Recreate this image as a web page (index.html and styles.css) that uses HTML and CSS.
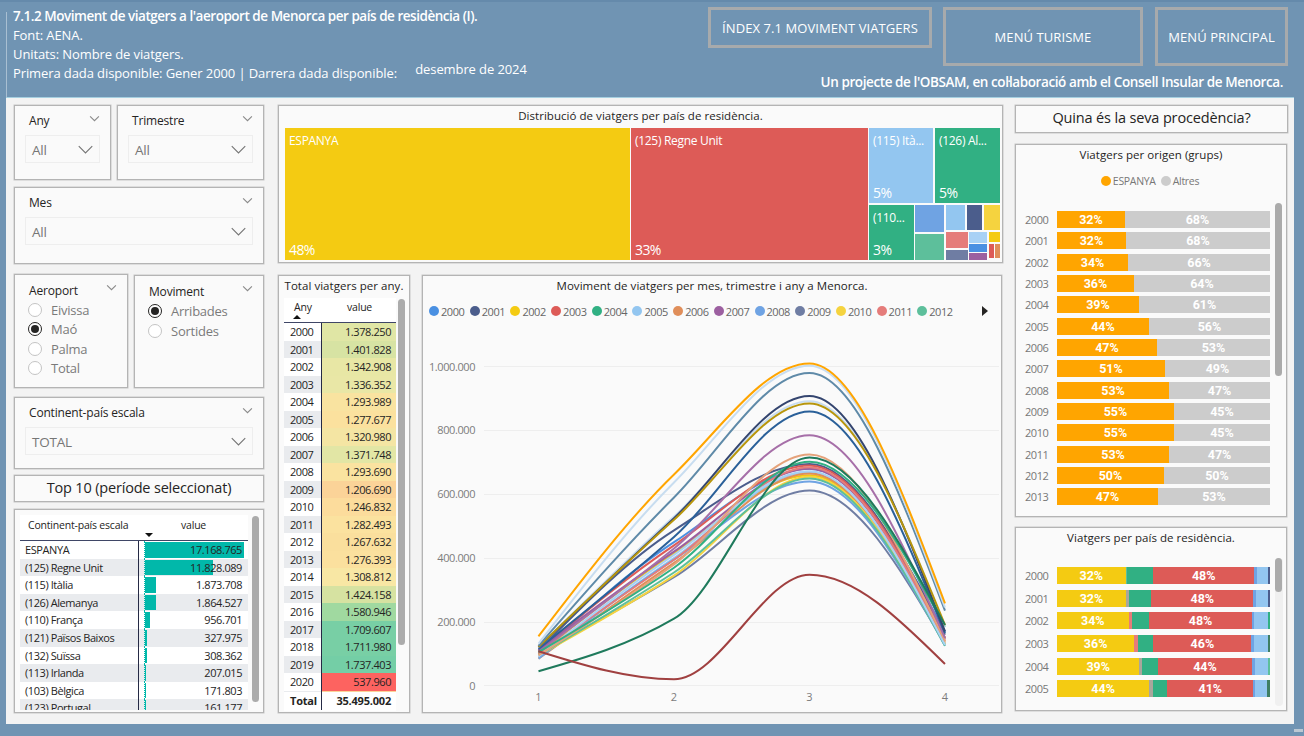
FILE: index.html
```html
<!DOCTYPE html>
<html lang="ca">
<head>
<meta charset="utf-8">
<title>Moviment de viatgers</title>
<link rel="stylesheet" href="styles.css">
</head>
<body>
<header class="header">
  <div class="intro">
    <div class="line title">7.1.2 Moviment de viatgers a l'aeroport de Menorca per país de residència (I).</div>
    <div class="line">Font: AENA.</div>
    <div class="line">Unitats: Nombre de viatgers.</div>
    <div class="line">Primera dada disponible: Gener 2000 | Darrera dada disponible: <span class="date">desembre de 2024</span></div>
  </div>
  <div class="nav">
    <div class="buttons">
      <div class="btn btn-index">ÍNDEX 7.1 MOVIMENT VIATGERS</div>
      <div class="btn btn-tur">MENÚ TURISME</div>
      <div class="btn btn-pri">MENÚ PRINCIPAL</div>
    </div>
    <div class="credit">Un projecte de l'OBSAM, en col·laboració amb el Consell Insular de Menorca.</div>
  </div>
</header>

<main class="main">
  <section class="col-left">
    <div class="row slicers-top">
      <div class="panel slicer s-any">
        <div class="sl-head"><span>Any</span><svg class="chev-s" viewBox="0 0 10 6"><path d="M1 1l4 4 4-4"/></svg></div>
        <div class="drop"><span>All</span><svg class="chev-l" viewBox="0 0 14 8"><path d="M1 1l6 6 6-6"/></svg></div>
      </div>
      <div class="panel slicer s-tri">
        <div class="sl-head"><span>Trimestre</span><svg class="chev-s" viewBox="0 0 10 6"><path d="M1 1l4 4 4-4"/></svg></div>
        <div class="drop"><span>All</span><svg class="chev-l" viewBox="0 0 14 8"><path d="M1 1l6 6 6-6"/></svg></div>
      </div>
    </div>
    <div class="panel slicer s-mes">
      <div class="sl-head"><span>Mes</span><svg class="chev-s" viewBox="0 0 10 6"><path d="M1 1l4 4 4-4"/></svg></div>
      <div class="drop"><span>All</span><svg class="chev-l" viewBox="0 0 14 8"><path d="M1 1l6 6 6-6"/></svg></div>
    </div>
    <div class="row radios-row">
      <div class="panel radio-panel s-aero">
        <div class="sl-head"><span>Aeroport</span><svg class="chev-s" viewBox="0 0 10 6"><path d="M1 1l4 4 4-4"/></svg></div>
        <div class="radio"><i></i>Eivissa</div>
        <div class="radio on"><i></i>Maó</div>
        <div class="radio"><i></i>Palma</div>
        <div class="radio"><i></i>Total</div>
      </div>
      <div class="panel radio-panel s-mov">
        <div class="sl-head"><span>Moviment</span><svg class="chev-s" viewBox="0 0 10 6"><path d="M1 1l4 4 4-4"/></svg></div>
        <div class="radio wide on"><i></i>Arribades</div>
        <div class="radio wide"><i></i>Sortides</div>
      </div>
    </div>
    <div class="panel slicer s-cont">
      <div class="sl-head"><span>Continent-país escala</span><svg class="chev-s" viewBox="0 0 10 6"><path d="M1 1l4 4 4-4"/></svg></div>
      <div class="drop"><span>TOTAL</span><svg class="chev-l" viewBox="0 0 14 8"><path d="M1 1l6 6 6-6"/></svg></div>
    </div>
    <div class="panel heading s-top">Top 10 (període seleccionat)</div>
    <div class="panel top-table">
      <div class="tt-body">
        <div class="tt-head"><span class="tt-h1">Continent-país escala</span><span class="tt-h2">value</span><i class="sort-down"></i></div>
        <div class="tt-row"><span class="tt-name">ESPANYA</span><span class="tt-val"><b style="width:99px"></b><em>17.168.765</em></span></div>
        <div class="tt-row alt"><span class="tt-name">(125) Regne Unit</span><span class="tt-val"><b style="width:68px"></b><em>11.828.089</em></span></div>
        <div class="tt-row"><span class="tt-name">(115) Itàlia</span><span class="tt-val"><b style="width:11px"></b><em>1.873.708</em></span></div>
        <div class="tt-row alt"><span class="tt-name">(126) Alemanya</span><span class="tt-val"><b style="width:11px"></b><em>1.864.527</em></span></div>
        <div class="tt-row"><span class="tt-name">(110) França</span><span class="tt-val"><b style="width:5px"></b><em>956.701</em></span></div>
        <div class="tt-row alt"><span class="tt-name">(121) Països Baixos</span><span class="tt-val"><b style="width:2px"></b><em>327.975</em></span></div>
        <div class="tt-row"><span class="tt-name">(132) Suïssa</span><span class="tt-val"><b style="width:2px"></b><em>308.362</em></span></div>
        <div class="tt-row alt"><span class="tt-name">(113) Irlanda</span><span class="tt-val"><b style="width:1px"></b><em>207.015</em></span></div>
        <div class="tt-row"><span class="tt-name">(103) Bèlgica</span><span class="tt-val"><b style="width:1px"></b><em>171.803</em></span></div>
        <div class="tt-row alt"><span class="tt-name">(123) Portugal</span><span class="tt-val"><b style="width:1px"></b><em>161.177</em></span></div>
      </div>
      <div class="thumb tt-thumb"></div>
    </div>
  </section>

  <section class="col-mid">
    <div class="panel tree-panel">
      <div class="p-title">Distribució de viatgers per país de residència.</div>
      <div class="tree">
        <div class="tile t-es c-yellow"><span>ESPANYA</span><strong>48%</strong></div>
        <div class="tile t-uk c-red"><span>(125) Regne Unit</span><strong>33%</strong></div>
        <div class="tree-rest">
          <div class="tr-top">
            <div class="tile t-it c-lblue"><span>(115) Ità...</span><strong>5%</strong></div>
            <div class="tile t-de c-green"><span>(126) Al...</span><strong>5%</strong></div>
          </div>
          <div class="tr-bot">
            <div class="tile t-fr c-green"><span>(110...</span><strong>3%</strong></div>
            <div class="tc tc-a"><div class="c-blue2 g27"></div><div class="c-green2 g26"></div></div>
            <div class="tc tc-b">
              <div class="tr tr-25"><div class="c-lblue w19"></div><div class="c-navy w15"></div><div class="c-yellow2 w16"></div></div>
              <div class="tr tr-28">
                <div class="tc tc-c"><div class="c-salmon g16"></div><div class="c-slate g10"></div></div>
                <div class="tc tc-d"><div class="c-lblue2 g11"></div><div class="c-blue g8"></div><div class="c-purple g7"></div></div>
                <div class="tc tc-e"><div class="c-yellow g10"></div><div class="tr tr-14"><div class="c-red w5"></div><div class="c-orange w5"></div></div></div>
              </div>
            </div>
          </div>
        </div>
      </div>
    </div>
    <div class="row mid-bottom">
      <div class="panel year-panel">
        <div class="p-title yt">Total viatgers per any.</div>
        <div class="yt-table">
          <div class="yt-head"><span class="yh1">Any<i class="sort-up"></i></span><span class="yh2">value</span></div>
          <div class="yt-rows">
            <div class="yr"><span>2000</span><em style="background:#e0e6a5">1.378.250</em></div>
            <div class="yr alt"><span>2001</span><em style="background:#d7e3a3">1.401.828</em></div>
            <div class="yr"><span>2002</span><em style="background:#e8e7a5">1.342.908</em></div>
            <div class="yr alt"><span>2003</span><em style="background:#e9e7a6">1.336.352</em></div>
            <div class="yr"><span>2004</span><em style="background:#f9e3a0">1.293.989</em></div>
            <div class="yr alt"><span>2005</span><em style="background:#fbe19e">1.277.677</em></div>
            <div class="yr"><span>2006</span><em style="background:#f4e5a3">1.320.980</em></div>
            <div class="yr alt"><span>2007</span><em style="background:#e2e6a5">1.371.748</em></div>
            <div class="yr"><span>2008</span><em style="background:#fae3a0">1.293.690</em></div>
            <div class="yr alt"><span>2009</span><em style="background:#fbd398">1.206.690</em></div>
            <div class="yr"><span>2010</span><em style="background:#fcdc9c">1.246.832</em></div>
            <div class="yr alt"><span>2011</span><em style="background:#fbe29f">1.282.493</em></div>
            <div class="yr"><span>2012</span><em style="background:#fadf9d">1.267.632</em></div>
            <div class="yr alt"><span>2013</span><em style="background:#fbe09e">1.276.393</em></div>
            <div class="yr"><span>2014</span><em style="background:#f8e7a4">1.308.812</em></div>
            <div class="yr alt"><span>2015</span><em style="background:#d6e2a1">1.424.158</em></div>
            <div class="yr"><span>2016</span><em style="background:#a0d9a0">1.580.946</em></div>
            <div class="yr alt"><span>2017</span><em style="background:#78cfa5">1.709.607</em></div>
            <div class="yr"><span>2018</span><em style="background:#78cfa5">1.711.980</em></div>
            <div class="yr alt"><span>2019</span><em style="background:#74cea6">1.737.403</em></div>
            <div class="yr"><span>2020</span><em style="background:#fd6360">537.960</em></div>
            <div class="yr alt sliver"><span></span><em style="background:#fbd49a"></em></div>
          </div>
          <div class="yr total"><span>Total</span><em>35.495.002</em></div>
        </div>
        <div class="thumb yt-thumb"></div>
      </div>
      <div class="panel line-panel">
        <div class="p-title lt">Moviment de viatgers per mes, trimestre i any a Menorca.</div>
        <div class="legend">
          <span><i class="c-blue"></i>2000</span><span><i class="c-navy"></i>2001</span><span><i class="c-yellow"></i>2002</span><span><i class="c-red"></i>2003</span><span><i class="c-green"></i>2004</span><span><i class="c-lblue"></i>2005</span><span><i class="c-orange"></i>2006</span><span><i class="c-purple"></i>2007</span><span><i class="c-blue2"></i>2008</span><span><i class="c-slate"></i>2009</span><span><i class="c-yellow2"></i>2010</span><span><i class="c-salmon"></i>2011</span><span><i class="c-green2"></i>2012</span>
          <b class="next"></b>
        </div>
        <svg class="chart" id="chart" viewBox="424 330 577 378">
          <g class="grid">
            <line x1="484" x2="999" y1="366.5" y2="366.5"/>
            <line x1="484" x2="999" y1="430.5" y2="430.5"/>
            <line x1="484" x2="999" y1="494.5" y2="494.5"/>
            <line x1="484" x2="999" y1="558.5" y2="558.5"/>
            <line x1="484" x2="999" y1="622.5" y2="622.5"/>
            <line x1="484" x2="999" y1="685.5" y2="685.5"/>
          </g>
          <g class="ylab">
            <text x="475" y="371">1.000.000</text>
            <text x="475" y="434">800.000</text>
            <text x="475" y="498">600.000</text>
            <text x="475" y="562">400.000</text>
            <text x="475" y="626">200.000</text>
            <text x="475" y="690">0</text>
          </g>
          <g class="xlab">
            <text x="538.5" y="701">1</text>
            <text x="674" y="701">2</text>
            <text x="809.5" y="701">3</text>
            <text x="945" y="701">4</text>
          </g>
          <g id="lines" class="lines"></g>
        </svg>
      </div>
    </div>
  </section>

  <section class="col-right">
    <div class="panel heading s-qui">Quina és la seva procedència?</div>
    <div class="panel stack-panel sp-1">
      <div class="p-title st">Viatgers per origen (grups)</div>
      <div class="st-legend"><span><i class="c-amber"></i>ESPANYA</span><span><i class="c-grey"></i>Altres</span></div>
      <div class="bars bars-1">
        <div class="bar-row"><label>2000</label><div class="bar"><div class="c-amber" style="width:31.9%">32%</div><div class="c-grey fill">68%</div></div></div>
        <div class="bar-row"><label>2001</label><div class="bar"><div class="c-amber" style="width:32.4%">32%</div><div class="c-grey fill">68%</div></div></div>
        <div class="bar-row"><label>2002</label><div class="bar"><div class="c-amber" style="width:33.4%">34%</div><div class="c-grey fill">66%</div></div></div>
        <div class="bar-row"><label>2003</label><div class="bar"><div class="c-amber" style="width:36.1%">36%</div><div class="c-grey fill">64%</div></div></div>
        <div class="bar-row"><label>2004</label><div class="bar"><div class="c-amber" style="width:38.5%">39%</div><div class="c-grey fill">61%</div></div></div>
        <div class="bar-row"><label>2005</label><div class="bar"><div class="c-amber" style="width:43.2%">44%</div><div class="c-grey fill">56%</div></div></div>
        <div class="bar-row"><label>2006</label><div class="bar"><div class="c-amber" style="width:46.9%">47%</div><div class="c-grey fill">53%</div></div></div>
        <div class="bar-row"><label>2007</label><div class="bar"><div class="c-amber" style="width:50.7%">51%</div><div class="c-grey fill">49%</div></div></div>
        <div class="bar-row"><label>2008</label><div class="bar"><div class="c-amber" style="width:52.6%">53%</div><div class="c-grey fill">47%</div></div></div>
        <div class="bar-row"><label>2009</label><div class="bar"><div class="c-amber" style="width:54.9%">55%</div><div class="c-grey fill">45%</div></div></div>
        <div class="bar-row"><label>2010</label><div class="bar"><div class="c-amber" style="width:54.9%">55%</div><div class="c-grey fill">45%</div></div></div>
        <div class="bar-row"><label>2011</label><div class="bar"><div class="c-amber" style="width:52.6%">53%</div><div class="c-grey fill">47%</div></div></div>
        <div class="bar-row"><label>2012</label><div class="bar"><div class="c-amber" style="width:50.2%">50%</div><div class="c-grey fill">50%</div></div></div>
        <div class="bar-row"><label>2013</label><div class="bar"><div class="c-amber" style="width:47.4%">47%</div><div class="c-grey fill">53%</div></div></div>
      </div>
      <div class="thumb sp1-thumb"></div>
    </div>
    <div class="panel stack-panel sp-2">
      <div class="p-title st">Viatgers per país de residència.</div>
      <div class="bars bars-2">
        <div class="bar-row"><label>2000</label><div class="bar"><div class="c-yellow" style="width:32.2%">32%</div><div class="c-green2" style="width:.9%"></div><div class="c-green" style="width:12.1%"></div><div class="c-red" style="width:47.4%">48%</div><div class="c-blue2" style="width:1.3%"></div><div class="c-lblue" style="width:5%"></div><div class="c-navy fill"></div></div></div>
        <div class="bar-row"><label>2001</label><div class="bar"><div class="c-yellow" style="width:32.4%">32%</div><div class="c-ash" style="width:1.4%"></div><div class="c-green" style="width:10.5%"></div><div class="c-red" style="width:47.9%">48%</div><div class="c-blue2" style="width:1.4%"></div><div class="c-lblue" style="width:5.5%"></div><div class="c-navy fill"></div></div></div>
        <div class="bar-row"><label>2002</label><div class="bar"><div class="c-yellow" style="width:33.6%">34%</div><div class="c-salmon" style="width:1.4%"></div><div class="c-green" style="width:8.3%"></div><div class="c-red" style="width:48.2%">48%</div><div class="c-blue2" style="width:1.1%"></div><div class="c-lblue" style="width:6.3%"></div><div class="c-green fill"></div></div></div>
        <div class="bar-row"><label>2003</label><div class="bar"><div class="c-yellow" style="width:36.3%">36%</div><div class="c-salmon" style="width:1.6%"></div><div class="c-green" style="width:7.4%"></div><div class="c-red" style="width:45.9%">46%</div><div class="c-blue2" style="width:1.4%"></div><div class="c-lblue" style="width:6.3%"></div><div class="c-dgreen fill"></div></div></div>
        <div class="bar-row"><label>2004</label><div class="bar"><div class="c-yellow" style="width:38.7%">39%</div><div class="c-ash" style="width:1.4%"></div><div class="c-green" style="width:7.5%"></div><div class="c-red" style="width:43.8%">44%</div><div class="c-blue2" style="width:1.4%"></div><div class="c-lblue" style="width:6.3%"></div><div class="c-green2 fill"></div></div></div>
        <div class="bar-row"><label>2005</label><div class="bar"><div class="c-yellow" style="width:43.3%">44%</div><div class="c-ash" style="width:1.6%"></div><div class="c-green" style="width:6.9%"></div><div class="c-red" style="width:40.4%">41%</div><div class="c-blue2" style="width:.9%"></div><div class="c-lblue" style="width:5.6%"></div><div class="c-dgreen fill"></div></div></div>
      </div>
      <div class="track"><div class="thumb sp2-thumb"></div></div>
    </div>
  </section>
</main>
<div class="grip"></div>
<script src="chart.js"></script>
</body>
</html>
```

FILE: styles.css
```css
* { box-sizing: border-box; }
html, body { margin: 0; padding: 0; }
body {
  width: 1304px; height: 736px; overflow: hidden; position: relative;
  background: #7094b3;
  font-family: "Open Sans", "Noto Sans", sans-serif;
  color: #252423;
  font-size: 11px;
}
/* colours */
.c-yellow { background: #f4cb12; } .c-red { background: #dd5b57; }
.c-lblue { background: #93c6f0; } .c-green { background: #31b083; }
.c-blue { background: #4a90e2; } .c-blue2 { background: #6fa3e3; }
.c-green2 { background: #5dbf9b; } .c-navy { background: #4b5d8c; }
.c-yellow2 { background: #f5d33f; } .c-salmon { background: #e57c7a; }
.c-slate { background: #6f7da3; } .c-lblue2 { background: #a8d1f5; }
.c-purple { background: #9c5fa0; } .c-orange { background: #e08e5a; }
.c-amber { background: #ffa500; } .c-grey { background: #cccccc; }
.c-ash { background: #a9a69c; } .c-dgreen { background: #3f7f63; }

/* header */
.header { height: 97px; display: flex; position: relative; border-top: 2px solid #658aab; }
.header::before { content: ""; position: absolute; left: 6px; top: 10px; bottom: 0; width: 1px; background: #a9bfd2; }
.intro { padding: 5px 0 0 13px; color: #fff; font-size: 13px; letter-spacing: -.1px; }
.line { height: 19px; line-height: 19px; display: flex; white-space: pre-wrap; }
.title { font-weight: 600; font-size: 13.5px; letter-spacing: -.47px; }
.date { margin-left: 15px; margin-bottom: 8px; line-height: 11px; }
.nav { margin-left: auto; padding: 5px 16px 0 0; display: flex; flex-direction: column; align-items: flex-end; }
.buttons { display: flex; align-items: flex-start; }
.btn { border: 3px solid #a7aaac; color: #fff; font-size: 13px; letter-spacing: .08px; display: flex; align-items: center; justify-content: center; }
.btn-index { width: 224px; height: 41px; }
.btn-tur { width: 200px; height: 59px; margin-left: 11px; }
.btn-pri { width: 133px; height: 59px; margin-left: 12px; }
.credit { margin-top: 7px; margin-right: 5px; height: 18px; line-height: 18px; font-size: 13.5px; font-weight: 600; letter-spacing: -.41px; color: #fff; }

/* main canvas */
.main { margin-left: 6px; width: 1288px; height: 627px; background: #f3f3f3; border-top: 1px solid #a5cfe0; padding-top: 7px; padding-left: 8px; display: flex; }
.panel { background: #fafafa; border: 1px solid #b4b4b4; box-shadow: 0 0 0 .5px #c8c8c8; position: relative; }
.row { display: flex; }
.thumb { position: absolute; background: #ababab; border-radius: 4px; width: 7px; }
.col-left { width: 250px; display: flex; flex-direction: column; }
.col-mid { width: 725px; margin: 0 12px 0 14px; display: flex; flex-direction: column; }
.col-right { width: 272px; display: flex; flex-direction: column; }

/* slicers */
.slicers-top { height: 75px; justify-content: space-between; }
.s-any { width: 97px; } .s-tri { width: 147px; }
.s-mes { height: 77px; margin-top: 7px; }
.radios-row { height: 114px; margin-top: 10px; justify-content: space-between; }
.s-aero { width: 114px; } .s-mov { width: 130px; margin-top: 1px; }
.s-cont { height: 72px; margin-top: 9px; }
.slicer { padding: 4px 10px 0 10px; }
.sl-head { height: 21px; display: flex; align-items: center; justify-content: space-between; padding-left: 4px; font-size: 12px; letter-spacing: -.18px; color: #252423; }
.chev-s { width: 11px; height: 7px; fill: none; stroke: #8a8a8a; stroke-width: 1; margin-top: -5px; flex: none; }
.chev-l { width: 17px; height: 9px; fill: none; stroke: #757575; stroke-width: 1; flex: none; margin-top: -2px; }
.drop { height: 28px; margin-top: 4px; border: 1px solid #eeeeee; display: flex; align-items: center; justify-content: space-between; padding: 2px 5px 0 6px; font-size: 13.5px; color: #767676; letter-spacing: -.2px; }
.radio-panel { padding: 5px 10px 0 14px; }
.radio-panel .sl-head { padding-left: 0; margin-bottom: -1px; }
.radio-panel .chev-s { margin-top: -7px; }
.radio { height: 19.5px; display: flex; align-items: center; font-size: 13px; letter-spacing: -.25px; color: #7a7a7a; margin-left: -1px; }
.radio i { width: 14px; height: 14px; border-radius: 50%; border: 1px solid #c4c4c4; background: #fff; margin-right: 9px; flex: none; position: relative; }
.radio.wide { height: 20px; }
.radio.on i { border-color: #252423; }
.radio.on i::after { content: ""; position: absolute; inset: 2px; border-radius: 50%; background: #252423; }
.s-top { height: 27px; margin-top: 6px; }
.heading { display: flex; align-items: center; justify-content: center; padding-bottom: 3px; font-size: 14.5px; letter-spacing: -.18px; color: #252423; }

/* top 10 */
.top-table { height: 204px; margin-top: 7px; overflow: hidden; }
.tt-body { position: absolute; left: 5px; top: 5px; width: 228px; height: 195px; overflow: hidden; background: #fff; }
.tt-head { height: 26px; border-bottom: 1px solid #3f4666; position: relative; display: flex; font-size: 10.5px; letter-spacing: -.2px; color: #252423; }
.tt-h1 { position: absolute; left: 8px; top: 3px; line-height: 14px; }
.tt-h2 { position: absolute; left: 161px; top: 3px; line-height: 14px; }
.sort-down { position: absolute; left: 125px; top: 18px; border: 4px solid transparent; border-top: 4px solid #111; border-bottom: 0; }
.tt-row { height: 17.6px; display: flex; font-size: 11px; letter-spacing: -.42px; color: #252423; background: #fff; }
.tt-row.alt { background: #e9ebee; }
.tt-name { width: 119px; flex: none; padding-left: 5px; line-height: 17.6px; border-right: 1px solid #252a45; white-space: nowrap; }
.tt-val { flex: 1; position: relative; margin-left: 5px; border-left: 1px dotted #01b8aa; line-height: 17.6px; text-align: right; padding-right: 6px; }
.tt-val b { position: absolute; left: 0; top: 1px; bottom: 1px; background: #01b8aa; }
.tt-val em { position: relative; font-style: normal; }
.tt-thumb { left: 237px; top: 6px; height: 186px; }

/* treemap */
.tree-panel { height: 158px; }
.p-title { text-align: center; font-size: 11.5px; letter-spacing: .04px; color: #252423; height: 19px; line-height: 19px; }
.tree { display: flex; height: 132px; margin: 3px 0 0 6px; }
.tile { display: flex; flex-direction: column; justify-content: space-between; padding: 4px 0 1px 4px; color: #fff; font-size: 12px; letter-spacing: -.3px; overflow: hidden; white-space: nowrap; line-height: 18px; }
.tile strong { font-weight: 400; font-size: 14px; letter-spacing: -.6px; line-height: 18px; }
.t-es { width: 345px; } .t-uk { width: 237px; margin-left: 1px; }
.tree-rest { width: 131px; margin-left: 1px; display: flex; flex-direction: column; }
.tr-top { display: flex; height: 75px; }
.t-it { width: 64px; } .t-de { width: 65px; margin-left: 2px; }
.tr-bot { display: flex; height: 55px; margin-top: 2px; }
.t-fr { width: 45px; }
.tc { display: flex; flex-direction: column; }
.tr { display: flex; }
.tc-a { width: 29px; margin-left: 1px; row-gap: 2px; }
.tc-b { width: 54px; margin-left: 2px; row-gap: 2px; }
.tr-25 { height: 25px; column-gap: 2px; }
.tr-28 { height: 28px; }
.tr-14 { height: 14px; column-gap: 1px; }
.tc-c { width: 22px; row-gap: 2px; }
.tc-d { width: 18px; margin-left: 1px; row-gap: 1px; }
.tc-e { width: 11px; margin-left: 2px; row-gap: 2px; }
.g27 { height: 27px; } .g26 { height: 26px; } .g16 { height: 16px; } .g10 { height: 10px; }
.g11 { height: 11px; } .g8 { height: 8px; } .g7 { height: 7px; }
.w19 { width: 19px; } .w15 { width: 15px; } .w16 { width: 16px; } .w5 { width: 5px; }

/* middle bottom */
.mid-bottom { height: 438px; margin-top: 12px; }
.year-panel { width: 132px; }
.yt { height: 21px; line-height: 19px; }
.yt-table { position: absolute; left: 5px; top: 22px; width: 112px; height: 413px; background: #fff; display: flex; flex-direction: column; font-size: 11px; letter-spacing: -.42px; }
.yt-head { height: 25px; flex: none; border-bottom: 1px solid #3f4666; display: flex; position: relative; font-size: 10.5px; letter-spacing: -.2px; }
.yh1 { position: absolute; left: 10px; top: 2px; line-height: 14px; }
.yh2 { position: absolute; left: 63px; top: 2px; line-height: 14px; }
.sort-up { position: absolute; left: -1px; top: 15px; border: 4px solid transparent; border-bottom: 4px solid #111; border-top: 0; }
.yt-rows { height: 369px; flex: none; overflow: hidden; }
.yr { height: 17.5px; display: flex; line-height: 17.5px; background: #fff; }
.yr.alt { background: #e9ebee; }
.yr span { width: 38px; flex: none; padding-left: 6px; border-right: 1px solid #252a45; }
.yr em { flex: 1; font-style: normal; text-align: right; padding-right: 5px; }
.yr.total { height: 18px; font-weight: 700; flex: none; letter-spacing: -.2px; }
.yt-thumb { left: 119px; top: 23px; height: 346px; }
.line-panel { width: 580px; margin-left: 12px; }
.lt { height: 19px; }
.legend { display: flex; height: 20px; margin: 6px 0 0 6px; font-size: 11px; letter-spacing: -.42px; color: #666; position: relative; }
.legend span { width: 40.7px; flex: none; display: flex; align-items: center; }
.legend i { width: 10px; height: 10px; border-radius: 50%; margin-right: 2px; flex: none; }
.next { position: absolute; left: 553px; top: 5px; border: 5px solid transparent; border-left: 6px solid #252423; border-right: 0; }
.chart { display: block; width: 577px; height: 378px; margin: 9px 0 0 1px; }
.grid line { stroke: #eeeeee; stroke-width: 1; }
.ylab text { font-size: 11px; fill: #7c7c7c; text-anchor: end; letter-spacing: -.42px; font-family: "Open Sans", sans-serif; }
.xlab text { font-size: 11px; fill: #7c7c7c; text-anchor: middle; font-family: "Open Sans", sans-serif; }
.lines path { fill: none; stroke-width: 2; }

/* right column */
.s-qui { height: 28px; font-size: 14.5px; letter-spacing: -.15px; width: 273px; }
.stack-panel { overflow: hidden; }
.sp-1 { height: 373px; margin-top: 11px; }
.sp-2 { height: 184px; margin-top: 10px; }
.st { line-height: 19px; }
.st-legend { display: flex; justify-content: center; height: 16px; margin-top: 9px; font-size: 10.5px; letter-spacing: -.3px; color: #777; column-gap: 5px; padding-right: 2px; }
.st-legend span { display: flex; align-items: center; }
.st-legend i { width: 10px; height: 10px; border-radius: 50%; margin-right: 2px; }
.bars { font-family: "Roboto", sans-serif; margin-left: 9px; }
.bars-1 { margin-top: 22px; }
.bars-2 { margin-top: 20px; }
.bar-row { display: flex; align-items: center; }
.bars-1 .bar-row { height: 17px; margin-bottom: 4.33px; }
.bars-2 .bar-row { height: 17px; margin-bottom: 5.67px; }
.bar-row label { width: 32px; flex: none; font-family: "Open Sans", sans-serif; font-size: 11px; letter-spacing: -.42px; color: #777; }
.bar { width: 213px; height: 17px; display: flex; color: #fff; font-size: 12.5px; font-weight: 700; line-height: 18px; text-align: center; }
.fill { flex: 1; }
.sp1-thumb { left: 259px; top: 58px; height: 173px; }
.track { position: absolute; left: 259px; top: 30px; width: 8px; height: 148px; background: #f0f0f0; border-radius: 4px; }
.sp2-thumb { left: 0; top: 0; height: 34px; }
.grip { position: absolute; left: 1294px; top: 729px; width: 9px; height: 3px; background: #bcc8d3; }
```

FILE: chart.js
```js
(function () {
  var X = [538.5, 674, 809.5, 945];
  var H = 135.5;
  function py(v) { return 685.7 - v * 0.319; }
  var series = [
    ['#4a90e2', 100, 450, 680, 170], ['#6f7da3', 100, 340, 612, 130], ['#4b5d8c', 110, 487, 695, 160],
    ['#f2c80f', 100, 415, 660, 150], ['#dd5b57', 110, 440, 690, 150], ['#93c6f0', 90, 400, 670, 130],
    ['#e08e5a', 85, 385, 665, 135], ['#9c5fa0', 110, 420, 680, 145], ['#6fa3e3', 85, 395, 640, 125],
    ['#f5d33f', 95, 345, 655, 130], ['#e57c7a', 100, 395, 685, 140], ['#5dbf9b', 95, 355, 650, 125],
    ['#a8d1f5', 92, 410, 672, 128], ['#e5a27a', 95, 380, 725, 140], ['#a66fa8', 105, 430, 785, 150],
    ['#31b083', 105, 370, 702, 185], ['#2a6099', 115, 466, 860, 165], ['#c8ddf0', 120, 530, 892, 185],
    ['#34456f', 120, 525, 908, 170], ['#b8960c', 122, 520, 885, 190], ['#5f8aa8', 125, 590, 980, 235],
    ['#c8ddf0', 132, 637, 1003, 245], ['#ffa500', 155, 662, 1010, 258], ['#1f7a5c', 45, 210, 715, 190],
    ['#a04040', 108, 20, 348, 68]
  ];
  function sign(a) { return a < 0 ? -1 : 1; }
  function path(vals) {
    var y = vals.map(py), d = [], m = [], i;
    for (i = 0; i < 3; i++) d[i] = (y[i + 1] - y[i]) / H;
    for (i = 1; i < 3; i++) {
      m[i] = sign(d[i - 1]) !== sign(d[i]) ? 0 : 2 * d[i - 1] * d[i] / (d[i - 1] + d[i]);
    }
    m[0] = (3 * d[0] - m[1]) / 2;
    m[3] = (3 * d[2] - m[2]) / 2;
    var c = H / 3, s = 'M' + X[0] + ' ' + y[0].toFixed(1);
    for (i = 0; i < 3; i++) {
      s += 'C' + (X[i] + c).toFixed(1) + ' ' + (y[i] + m[i] * c).toFixed(1) + ' ' +
        (X[i + 1] - c).toFixed(1) + ' ' + (y[i + 1] - m[i + 1] * c).toFixed(1) + ' ' +
        X[i + 1] + ' ' + y[i + 1].toFixed(1);
    }
    return s;
  }
  var g = document.getElementById('lines');
  series.forEach(function (s) {
    var p = document.createElementNS('http://www.w3.org/2000/svg', 'path');
    p.setAttribute('d', path(s.slice(1)));
    p.setAttribute('stroke', s[0]);
    g.appendChild(p);
  });
})();
```
